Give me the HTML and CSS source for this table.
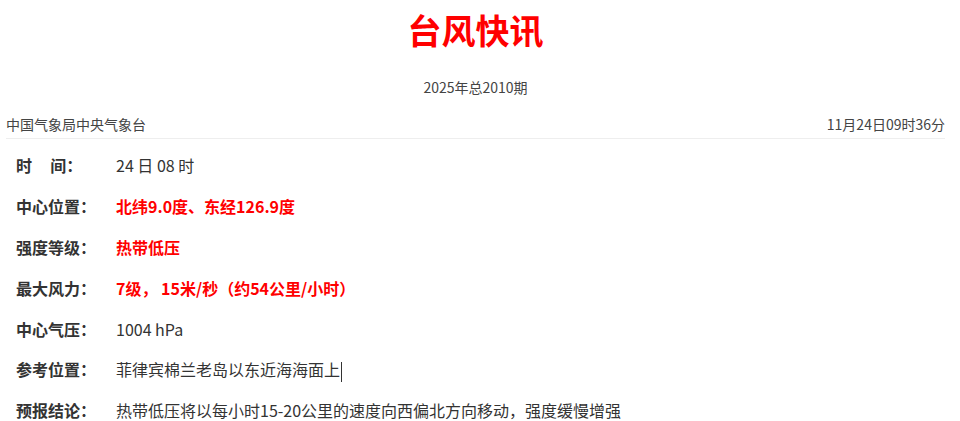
FILE: index.html
```html
<!DOCTYPE html>
<html lang="zh-CN">
<head>
    <meta charset="UTF-8">
    <meta name="viewport" content="width=device-width, initial-scale=1.0">
    <title>台风快讯</title>
    <link rel="stylesheet" href="styles.css">
</head>
<body>
    <div class="page">
        <h1 class="title">台风快讯</h1>
        <p class="issue">2025年总2010期</p>

        <div class="meta">
            <span>中国气象局中央气象台</span>
            <span>11月24日09时36分</span>
        </div>

        <div class="info">
            <div class="row">
                <span class="label">时&nbsp;&nbsp;&nbsp;&nbsp;&nbsp;间：</span>
                <span class="value">24 日 08 时</span>
            </div>
            <div class="row">
                <span class="label">中心位置：</span>
                <span class="value hot">北纬9.0度、东经126.9度</span>
            </div>
            <div class="row">
                <span class="label">强度等级：</span>
                <span class="value hot">热带低压</span>
            </div>
            <div class="row">
                <span class="label">最大风力：</span>
                <span class="value hot">7级， 15米/秒（约54公里/小时）</span>
            </div>
            <div class="row">
                <span class="label">中心气压：</span>
                <span class="value">1004 hPa</span>
            </div>
            <div class="row">
                <span class="label">参考位置：</span>
                <span class="value">菲律宾棉兰老岛以东近海海面上<span class="caret"></span></span>
            </div>
            <div class="row">
                <span class="label">预报结论：</span>
                <span class="value">热带低压将以每小时15-20公里的速度向西偏北方向移动，强度缓慢增强</span>
            </div>
        </div>
    </div>
</body>
</html>
```

FILE: styles.css
```css
body {
    margin: 0;
    font-family: "Noto Sans CJK SC", "Noto Sans", sans-serif;
    color: #333;
    background: #fff;
}

.page {
    width: 939px;
    margin-left: 6px;
}

.title {
    margin: 8px 0 0;
    text-align: center;
    font-size: 34px;
    line-height: 44px;
    font-weight: bold;
    color: #f00;
}

.issue {
    margin: 25px 0 0;
    text-align: center;
    font-size: 14px;
    line-height: 20px;
    color: #444;
}

.meta {
    display: flex;
    justify-content: space-between;
    margin-top: 17px;
    padding-bottom: 4px;
    border-bottom: 1px solid #eee;
    font-size: 14px;
    line-height: 20px;
    color: #444;
}

.info {
    padding: 6px 10px 0;
}

.row {
    display: flex;
    height: 40.8px;
    align-items: center;
    font-size: 16px;
}

.label {
    width: 100px;
    flex-shrink: 0;
    font-weight: bold;
    color: #333;
}

.value {
    color: #333;
}

.hot {
    color: #f00;
    font-weight: bold;
}

.caret {
    display: inline-block;
    width: 1px;
    height: 20px;
    margin-left: 1px;
    vertical-align: middle;
    background: #333;
}
```
